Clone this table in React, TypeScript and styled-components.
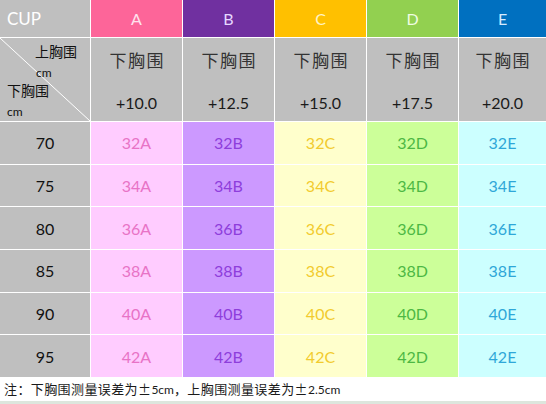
import styled, { createGlobalStyle } from 'styled-components';

const GlobalStyle = createGlobalStyle`
  html, body {
    margin: 0;
    padding: 0;
    background: #ffffff;
  }
  body {
    font-family: Lato, "Noto Sans CJK SC", sans-serif;
  }
`;

interface CupType {
  letter: string;
  head: string;
  headText: string;
  bg: string;
  text: string;
  plus: string;
}

const cups: CupType[] = [
  { letter: 'A', head: '#fd6599', headText: '#ffe2ee', bg: '#ffccff', text: '#e873c6', plus: '+10.0' },
  { letter: 'B', head: '#7030a0', headText: '#e6d8ff', bg: '#cc99ff', text: '#8e3edb', plus: '+12.5' },
  { letter: 'C', head: '#ffc000', headText: '#fff4c8', bg: '#ffffcc', text: '#f2cb2e', plus: '+15.0' },
  { letter: 'D', head: '#92d050', headText: '#effde2', bg: '#ccff99', text: '#4cb844', plus: '+17.5' },
  { letter: 'E', head: '#0070c0', headText: '#d6ebff', bg: '#ccffff', text: '#2fa7d8', plus: '+20.0' },
];

const bands = [70, 75, 80, 85, 90, 95];

const App = () => {
  return (
    <Page>
      <GlobalStyle />
      <Table>
        <CupCell>CUP</CupCell>
        {cups.map((c) => (
          <HeadCell key={c.letter} bg={c.head} color={c.headText}>
            {c.letter}
          </HeadCell>
        ))}

        <DiagCell>
          <DiagLine viewBox="0 0 90 83" preserveAspectRatio="none">
            <line x1="0" y1="0" x2="90" y2="83" stroke="#ffffff" strokeWidth="1" />
          </DiagLine>
          <DiagLabel indent={35} size={14} h={26}>上胸围</DiagLabel>
          <DiagLabel indent={36} size={12} h={18}>cm</DiagLabel>
          <DiagLabel indent={7} size={14} h={16}>下胸围</DiagLabel>
          <DiagLabel indent={7} size={12} h={27}>cm</DiagLabel>
        </DiagCell>
        {cups.map((c) => (
          <SubHead key={c.letter}>
            <SubTitle>下胸围</SubTitle>
            <SubValue>{c.plus}</SubValue>
          </SubHead>
        ))}

        {bands.map((b, i) => (
          <Row key={b}>
            <BandCell>{b}</BandCell>
            {cups.map((c) => (
              <SizeCell key={c.letter} bg={c.bg} color={c.text}>
                {32 + i * 2}
                {c.letter}
              </SizeCell>
            ))}
          </Row>
        ))}
      </Table>
      <Note>
        注：下胸围测量误差为±<Small>5cm</Small>，上胸围测量误差为±<Small>2.5cm</Small>
      </Note>
      <BottomRule />
    </Page>
  );
};

export default App;

const Page = styled.div`
  width: 546px;
  height: 404px;
  overflow: hidden;
  background: #ffffff;
`;

const Table = styled.div`
  display: grid;
  grid-template-columns: 90px 91px 91px 91px 91px 1fr;
  grid-template-rows: 37px 83px repeat(6, 41.67px);
  gap: 1px;
  background: #ffffff;
`;

const Row = styled.div`
  display: contents;
`;

const CupCell = styled.div`
  background: #bfbfbf;
  color: #ffffff;
  font-size: 17px;
  display: flex;
  align-items: center;
  padding-left: 7px;
`;

const HeadCell = styled.div<{ bg: string; color: string }>`
  background: ${(p) => p.bg};
  color: ${(p) => p.color};
  font-size: 16px;
  display: flex;
  align-items: center;
  justify-content: center;
`;

const DiagCell = styled.div`
  position: relative;
  background: #bfbfbf;
  display: flex;
  flex-direction: column;
  color: #111111;
  overflow: hidden;
`;

const DiagLine = styled.svg`
  position: absolute;
  left: 0;
  top: 0;
  width: 100%;
  height: 100%;
`;

const DiagLabel = styled.div<{ indent: number; size: number; h: number }>`
  position: relative;
  flex: none;
  padding-left: ${(p) => p.indent}px;
  font-size: ${(p) => p.size}px;
  height: ${(p) => p.h}px;
  line-height: ${(p) => p.h}px;
  white-space: nowrap;
  font-family: ${(p) => (p.size < 13 ? 'Lato, sans-serif' : '"Noto Sans CJK SC", sans-serif')};
`;

const SubHead = styled.div`
  background: #bfbfbf;
  display: flex;
  flex-direction: column;
  align-items: center;
  color: #1a1a1a;
  padding-top: 9px;
`;

const SubTitle = styled.div`
  font-family: "Noto Sans CJK SC", sans-serif;
  font-size: 17px;
  line-height: 26px;
  letter-spacing: 1.5px;
  margin-right: -1.5px;
  color: #333333;
`;

const SubValue = styled.div`
  font-size: 16px;
  line-height: 20px;
  margin-top: 20px;
`;

const BandCell = styled.div`
  background: #bfbfbf;
  color: #111111;
  font-size: 16px;
  display: flex;
  align-items: center;
  justify-content: center;
`;

const SizeCell = styled.div<{ bg: string; color: string }>`
  background: ${(p) => p.bg};
  color: ${(p) => p.color};
  font-size: 16px;
  display: flex;
  align-items: center;
  justify-content: center;
`;

const Note = styled.div`
  height: 22px;
  padding: 2px 0 0 4px;
  font-family: "Noto Sans CJK SC", sans-serif;
  font-size: 13px;
  line-height: 20px;
  letter-spacing: 0.4px;
  color: #1a1a1a;
  white-space: nowrap;
`;

const Small = styled.span`
  font-family: Lato, sans-serif;
  font-size: 12px;
  letter-spacing: 0;
`;

const BottomRule = styled.div`
  height: 3px;
  background: #dde6dd;
`;
